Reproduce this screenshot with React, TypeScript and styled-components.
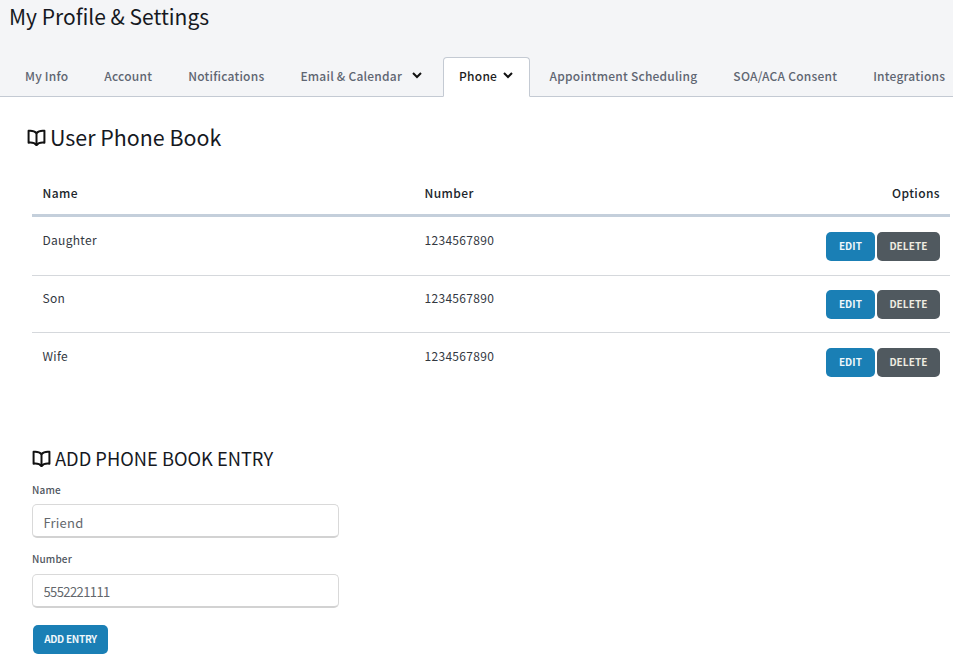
import React from "react";
import styled, { createGlobalStyle } from "styled-components";

const Global = createGlobalStyle`
  html, body { margin: 0; padding: 0; background: #fff; overflow: hidden; }
  body { font-family: "Noto Sans CJK SC", "Noto Sans", sans-serif; color: #1f2933; }
`;
const Page = styled.div`width: 953px; height: 656px; overflow: hidden; display: flex; flex-direction: column;`;
const Header = styled.header`
  height: 96px; background: #f4f5f7; border-bottom: 1px solid #c4cad3;
  display: flex; flex-direction: column; justify-content: space-between; flex: none;
`;
const Title = styled.h1`margin: 1.5px 0 0 9px; font-size: 21px; line-height: 28px; font-weight: 400; color: #16191f; white-space: nowrap;`;
const Tabs = styled.nav`display: flex; padding-left: 7px; height: 40px; margin-bottom: -1px;`;
const Tab = styled.div<{ $active?: boolean }>`
  display: flex; align-items: center; gap: ${p => p.$active ? 6 : 10}px; white-space: nowrap;
  box-sizing: border-box; height: 40px; padding: 0 18px 3px;
  font-size: 12px; font-weight: 500; letter-spacing: 0.22px;
  color: #5f6672;
  ${p => p.$active ? `
    color: #1d1d22; background: #fff; border: 1px solid #c4cad3; border-bottom: 1px solid #fff;
    border-radius: 4px 4px 0 0; padding: 0 16px 3px 15px; margin: 0 1.5px 0 3px;
  ` : ""}
`;
const Chevron = styled.svg`width: 10px; height: 7px; fill: none; stroke: #111; stroke-width: 2; flex: none;`;
const Main = styled.main`padding: 25px 3px 0 32px; flex: 1;`;
const SectionHead = styled.h2<{ $shift?: number; $size: number; $lh?: number }>`
  margin: 0 0 0 ${p => p.$shift ?? 0}px; display: flex; align-items: center; gap: 4px;
  font-weight: 400; font-size: ${p => p.$size}px; line-height: ${p => p.$lh ?? 30}px; color: #16191f; white-space: nowrap;
`;
const Book = styled.svg`width: 19px; height: 19px; fill: none; stroke: #111; stroke-width: 2.5; stroke-linecap: round; stroke-linejoin: round; flex: none;`;
const Table = styled.div`margin-top: 20px;`;
const Row = styled.div<{ $head?: boolean; $h: number; $last?: boolean; $lift?: number }>`
  display: grid; grid-template-columns: 382px 1fr auto; align-items: ${p => p.$head ? "center" : "start"};
  height: ${p => p.$h}px; box-sizing: border-box; padding: ${p => p.$head ? "0" : `${15 - (p.$lift ?? 0)}px`} 10px 0 10.5px;
  border-bottom: ${p => p.$last ? "0" : p.$head ? "3px solid #c4cfdb" : "1px solid #d5d8dc"};
`;
const HeadCell = styled.div<{ $right?: boolean }>`
  font-size: 12px; font-weight: 500; letter-spacing: 0.4px; color: #20252b; line-height: 18px;
  text-align: ${p => p.$right ? "right" : "left"};
`;
const Cell = styled.div`font-size: 12px; letter-spacing: 0.3px; color: #33383f; line-height: 18px; margin-top: -1px;`;
const Actions = styled.div`display: flex; gap: 2px;`;
const Btn = styled.button<{ $dark?: boolean; $w: number }>`
  width: ${p => p.$w}px; height: 29px; border: 0; border-radius: 5px; padding: 0 0 2px;
  background: ${p => p.$dark ? "#50595f" : "#1a7fb5"}; color: ${p => p.$dark ? "#eeece2" : "#f0f7fb"};
  font: 600 10px/27px "Noto Sans CJK SC", sans-serif; letter-spacing: 0.1px; text-align: center;
`;
const Form = styled.form`margin-top: 53px; display: flex; flex-direction: column; align-items: flex-start;`;
const Label = styled.label<{ $top?: number }>`
  font-size: 10px; line-height: 14px; color: #4f5660; letter-spacing: 0.15px; font-weight: 500;
  margin-top: ${p => p.$top ?? 0}px;
`;
const Input = styled.input<{ $digits?: boolean }>`
  box-sizing: border-box; display: block; width: 307px; height: 34px; padding: ${p => p.$digits ? "2px" : "4px"} 10.5px 0;
  border: 1px solid #d9d9d9; border-bottom: 2px solid #d2d2d2; border-radius: 5px; background: #fff;
  font: 400 13px "Noto Sans CJK SC", sans-serif; letter-spacing: ${p => p.$digits ? "-0.6px" : "0.2px"}; color: #63676c; outline: none;
  margin: ${p => p.$digits ? 8 : 7}px 0 14px;
`;
const Add = styled(Btn)`margin: 3px 0 0 1px; width: 75px; letter-spacing: -0.3px;`;

const BookIcon = () => (
  <Book viewBox="0 0 24 24">
    <path d="M12 6.5C10 4.2 6.5 3 2 3.5V18.5C6.5 18 10 19 12 21.5C14 19 17.5 18 22 18.5V3.5C17.5 3 14 4.2 12 6.5Z" />
    <path d="M12 6.5V21.5" />
  </Book>
);
const Down = () => <Chevron viewBox="0 0 10 7"><path d="M1 1l4 4 4-4" /></Chevron>;

const rows = [
  { name: "Daughter", h: 59, lift: 0 },
  { name: "Son", h: 57, lift: 1 },
  { name: "Wife", h: 58, lift: 0, last: true },
];

export default function App() {
  return (
    <Page>
      <Global />
      <Header>
        <Title>My Profile &amp; Settings</Title>
        <Tabs>
          <Tab>My Info</Tab>
          <Tab>Account</Tab>
          <Tab>Notifications</Tab>
          <Tab>Email &amp; Calendar <Down /></Tab>
          <Tab $active>Phone <Down /></Tab>
          <Tab>Appointment Scheduling</Tab>
          <Tab>SOA/ACA Consent</Tab>
          <Tab>Integrations</Tab>
        </Tabs>
      </Header>
      <Main>
        <SectionHead $size={21.4} $shift={-5}><BookIcon />User Phone Book</SectionHead>
        <Table>
          <Row $head $h={45}>
            <HeadCell>Name</HeadCell>
            <HeadCell>Number</HeadCell>
            <HeadCell $right>Options</HeadCell>
          </Row>
          {rows.map(r => (
            <Row key={r.name} $h={r.h} $last={r.last} $lift={r.lift}>
              <Cell>{r.name}</Cell>
              <Cell>1234567890</Cell>
              <Actions>
                <Btn $w={49}>EDIT</Btn>
                <Btn $dark $w={63}>DELETE</Btn>
              </Actions>
            </Row>
          ))}
        </Table>
        <Form>
          <SectionHead $size={18.3} $lh={29}><BookIcon />ADD PHONE BOOK ENTRY</SectionHead>
          <Label $top={10}>Name</Label>
          <Input defaultValue="Friend" />
          <Label>Number</Label>
          <Input $digits defaultValue="5552221111" />
          <Add $w={76} type="button">ADD ENTRY</Add>
        </Form>
      </Main>
    </Page>
  );
}
